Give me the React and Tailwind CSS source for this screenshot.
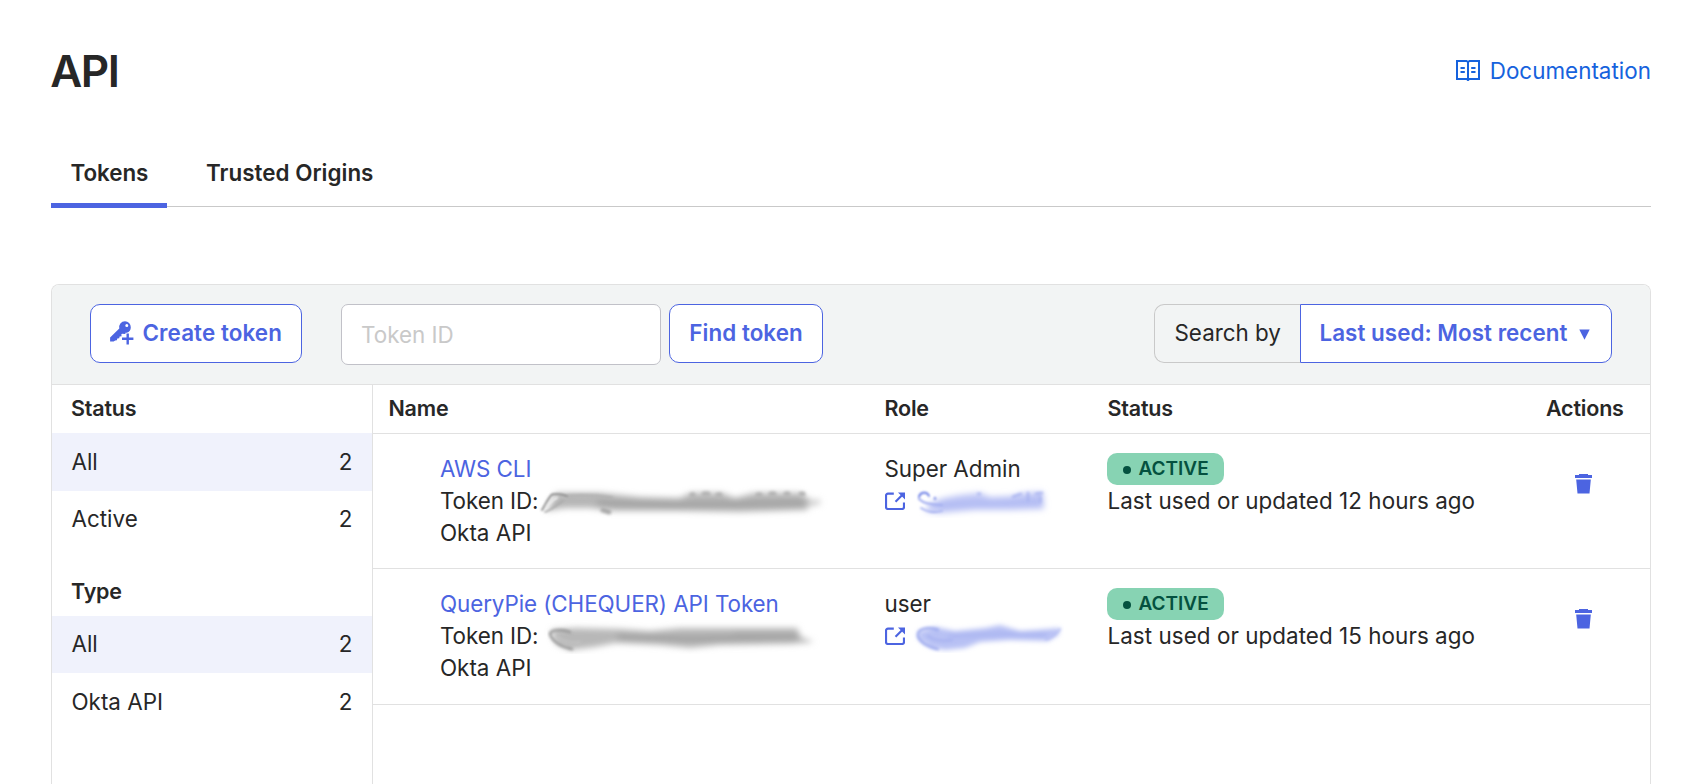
const statusFilters = [
  { label: "All", count: 2, selected: true, height: "h-[58px]" },
  { label: "Active", count: 2, height: "h-[57px] pb-px" },
];

const typeFilters = [
  { label: "All", count: 2, selected: true, height: "h-[57px] pb-px" },
  { label: "Okta API", count: 2, height: "h-[58px]" },
];

const tokens = [
  {
    name: "AWS CLI",
    type: "Okta API",
    role: "Super Admin",
    lastUsed: "Last used or updated 12 hours ago",
    IdMask: IdMaskA,
    UserMask: UserMaskA,
    height: "h-[135px]",
  },
  {
    name: "QueryPie (CHEQUER) API Token",
    type: "Okta API",
    role: "user",
    lastUsed: "Last used or updated 15 hours ago",
    IdMask: IdMaskB,
    UserMask: UserMaskB,
    height: "h-[136px]",
  },
];

function BookIcon() {
  return (
    <svg className="-mt-px" width="24" height="21" viewBox="0 0 24 21" fill="none" stroke="currentColor" strokeWidth="2">
      <path d="M1 1h9.500l1.500 1L13.500 1H23v18h-9.500l-1.500 1-1.500-1H1z" />
      <path d="M12 1.500v19" strokeWidth="2" />
      <path d="M4.500 8h4.300M4.500 12h4.300M15.200 8h4.300M15.200 12h4.300" strokeWidth="2" />
    </svg>
  );
}

function KeyPlusIcon() {
  return (
    <svg width="24" height="24" viewBox="0 0 24 24" fill="currentColor">
      <path
        fillRule="evenodd"
        d="M15 .2a6 6 0 0 1 5.800 6 6 6 0 0 1-4 5.600h-1.400v1.300L12 12.700l-.7.8.3 1.700-2 .3-.4 1.700-1.900.4-.4 1.700-1.700.3L3.600 20.400H.1v-4L9.300 7.500A5.900 5.900 0 0 1 15 .2ZM16.800 3a1.500 1.500 0 1 0 0 3 1.500 1.500 0 0 0 0-3Z"
      />
      <path d="M16.500 12.400h2.400v4.200h4.500v2.300h-4.500v4.500h-2.400v-4.500H12v-2.300h4.500z" />
    </svg>
  );
}

function ExternalIcon() {
  return (
    <svg className="ml-px mt-[7px] shrink-0" width="20" height="18" viewBox="0 0 20 18" fill="none" stroke="#4c64e1" strokeWidth="2.200">
      <path d="M8.800 1.600H3a2 2 0 0 0-2 2V15a2 2 0 0 0 2 2h14a2 2 0 0 0 2-2v-4.500" />
      <path d="M10.500 9.700 17.500 2.800" />
      <path d="M13 .4H20v7z" fill="#4c64e1" stroke="none" />
    </svg>
  );
}

function TrashIcon() {
  return (
    <svg width="17" height="20" viewBox="0 0 17 20" fill="#4c64e1">
      <path d="M4 0h9v1H17v3H0V1h4z" />
      <path d="M1.200 5.600h14.600L14.500 19.600h-12z" />
    </svg>
  );
}

function IdMaskA() {
  return (
    <svg className="shrink-0" width="296" height="36" viewBox="536 482 296 36" fill="none" strokeLinecap="round" strokeLinejoin="round">
      <defs>
        <filter id="ida-soft" x="-10%" y="-60%" width="120%" height="220%"><feGaussianBlur stdDeviation="3.200" /></filter>
        <filter id="ida-mid" x="-10%" y="-60%" width="120%" height="220%"><feGaussianBlur stdDeviation="1.800" /></filter>
        <filter id="ida-fine" x="-10%" y="-60%" width="120%" height="220%"><feGaussianBlur stdDeviation="0.900" /></filter>
      </defs>
      <g filter="url(#ida-soft)">
        <path d="M550 503 556 492 600 492 640 496 680 497 690 492 722 492 735 497 754 492 800 492 814 501 806 509 740 511 680 510 615 510 590 507 565 507 546 510Z" fill="#b6b6b6" />
        <path d="M600 502 680 504 805 502" stroke="#a2a2a2" strokeWidth="6" />
        <path d="M808 503 818 501" stroke="#ccc" strokeWidth="5" />
      </g>
      <g filter="url(#ida-mid)">
        <path d="M692 494l1 0M704 493l4 0M718 494l2 0M758 494l2 0M771 493l3 0M786 493l2 0M801 493l2 0" stroke="#b4b4b4" strokeWidth="5" />
        <path d="M603 509 609 511" stroke="#a8a8a8" strokeWidth="5" />
        <path d="M568 495C585 494 600 495 612 497" stroke="#b0b0b0" strokeWidth="3" />
      </g>
      <g filter="url(#ida-fine)">
        <path d="M542 509C546 503 548 497 552 493.500 558 492.500 562 493 567 495" stroke="#858585" strokeWidth="1.800" />
        <path d="M545 511C552 509 556 504 563 500" stroke="#aaa" strokeWidth="1.800" />
        <path d="M547 505C551 502 553 498 557 497" stroke="#eee" strokeWidth="2" />
      </g>
    </svg>
  );
}

function IdMaskB() {
  return (
    <svg className="shrink-0" width="296" height="36" viewBox="536 617 296 36" fill="none" strokeLinecap="round" strokeLinejoin="round">
      <defs>
        <filter id="idb-soft" x="-10%" y="-60%" width="120%" height="220%"><feGaussianBlur stdDeviation="3.200" /></filter>
        <filter id="idb-fine" x="-10%" y="-60%" width="120%" height="220%"><feGaussianBlur stdDeviation="1.800" /></filter>
      </defs>
      <g filter="url(#idb-soft)">
        <path d="M551 629 575 627 620 628 650 630 680 627 720 627 797 627 801 636 814 641 790 643 720 644 690 647 660 644 615 642 595 646 570 649 556 643Z" fill="#b8b8b8" />
        <path d="M620 636 690 638 795 636" stroke="#a2a2a2" strokeWidth="6" />
        <path d="M735 632 795 632" stroke="#b0b0b0" strokeWidth="4" />
      </g>
      <g filter="url(#idb-fine)">
        <path d="M570 631C562 628 550 629 550 633 552 640 561 646 572 648" stroke="#909090" strokeWidth="2.400" />
        <path d="M558 636C566 642 574 642 580 641" stroke="#c4c4c4" strokeWidth="2" />
      </g>
    </svg>
  );
}

function UserMaskA() {
  return (
    <svg className="shrink-0" width="152" height="36" viewBox="912 482 152 36" fill="none" strokeLinecap="round" strokeLinejoin="round">
      <defs>
        <filter id="usa-soft" x="-10%" y="-60%" width="120%" height="220%"><feGaussianBlur stdDeviation="3" /></filter>
        <filter id="usa-mid" x="-10%" y="-60%" width="120%" height="220%"><feGaussianBlur stdDeviation="1.700" /></filter>
        <filter id="usa-fine" x="-10%" y="-60%" width="120%" height="220%"><feGaussianBlur stdDeviation="0.800" /></filter>
      </defs>
      <g filter="url(#usa-soft)">
        <path d="M930 503 944 498 960 495 980 493 990 497 1012 496 1024 493 1043 492 1044 509 1010 510 975 510 940 513 925 511Z" fill="#bdc5f5" />
        <path d="M940 505 1040 502" stroke="#b0baf3" strokeWidth="5" />
      </g>
      <g filter="url(#usa-mid)">
        <path d="M1013 497 1021 494M1028 493v8M1036 494 1042 493M1040 497v5M978 494h2" stroke="#a8b3f0" strokeWidth="2.500" />
      </g>
      <g filter="url(#usa-fine)">
        <path d="M919 497C920 492 927 491 929 496" stroke="#6075e4" strokeWidth="1.800" />
        <path d="M919 499C924 504 932 505 942 505" stroke="#a5b0f0" strokeWidth="2.200" />
        <path d="M921 508C927 512 934 513 942 511" stroke="#a5b0f0" strokeWidth="1.800" />
        <path d="M935 498v1" stroke="#8d9bea" strokeWidth="2.500" />
      </g>
    </svg>
  );
}

function UserMaskB() {
  return (
    <svg className="shrink-0" width="152" height="36" viewBox="912 617 152 36" fill="none" strokeLinecap="round" strokeLinejoin="round">
      <defs>
        <filter id="usb-soft" x="-10%" y="-60%" width="120%" height="220%"><feGaussianBlur stdDeviation="2.900" /></filter>
        <filter id="usb-fine" x="-10%" y="-60%" width="120%" height="220%"><feGaussianBlur stdDeviation="1.500" /></filter>
      </defs>
      <g filter="url(#usb-soft)">
        <path d="M918 632 935 627 955 631 985 628 1000 625 1020 631 1035 630 1060 628 1058 635 1048 641 1010 640 980 642 965 648 945 650 930 647 919 639Z" fill="#b8c1f4" />
        <path d="M950 636 1000 634 1045 635" stroke="#aab5f1" strokeWidth="4" />
      </g>
      <g filter="url(#usb-fine)">
        <path d="M938 630C928 626 917 629 918 636 920 642 926 646 938 649" stroke="#9ba8ee" strokeWidth="2.500" />
        <path d="M928 636C936 642 946 641 952 640" stroke="#a5b0f0" strokeWidth="2" />
        <path d="M1046 639C1052 638 1056 634 1060 629" stroke="#b0baf3" strokeWidth="2" />
      </g>
    </svg>
  );
}

function FilterRow({ label, count, selected, height }) {
  return (
    <li className={`flex items-center justify-between pl-[19.500px] pr-[19.500px] ${height} ${selected ? "bg-[#f0f2fc]" : ""}`}>
      <span>{label}</span>
      <span>{count}</span>
    </li>
  );
}

function SectionTitle({ children, className = "" }) {
  return <h2 className={`text-[21.5px] font-semibold leading-8 tracking-[-0.2px] ${className}`}>{children}</h2>;
}

function TokenRow({ token }) {
  const { IdMask, UserMask } = token;
  return (
    <div className={`grid grid-cols-[495px_223px_438px_121px] border-b border-[#e1e1e1] pt-[19px] ${token.height}`}>
      <div className="pl-[67px]">
        <a className="block whitespace-nowrap tracking-[-0.080px] text-[#4c64e1]">{token.name}</a>
        <div className="flex h-8 items-center whitespace-nowrap">
          <span className="w-[96px] shrink-0 tracking-[-0.080px]">Token ID:</span>
          <IdMask />
        </div>
        <div>{token.type}</div>
      </div>
      <div className="pl-4">
        <div className="pl-[0.500px] tracking-[-0.040px]">{token.role}</div>
        <div className="flex h-8 items-start">
          <ExternalIcon />
          <span className="-mt-[3px] ml-[7px] shrink-0"><UserMask /></span>
        </div>
      </div>
      <div className="pl-4">
        <div className="flex h-8 w-[117px] items-center rounded-[10px] bg-[#87d3b3] pl-4 text-[19px] font-semibold text-[#04513f]">
          <span className="mr-[7.500px] mt-px size-2 rounded-full bg-[#04513f]" />
          ACTIVE
        </div>
        <div className="whitespace-nowrap pl-[0.500px] tracking-[0.060px]">{token.lastUsed}</div>
      </div>
      <div className="pl-[46px] pt-[21px]">
        <TrashIcon />
      </div>
    </div>
  );
}

export default function App() {
  return (
    <div className="flex h-[784px] flex-col overflow-hidden bg-white pl-[51px] pr-[53px] pt-[47px] font-[Inter,sans-serif] text-[22.4px] leading-8 text-[#272727]">
      <header className="flex h-[110px] shrink-0 items-start justify-between">
        <h1 className="-ml-[0.800px] text-[44px] font-semibold leading-[48px] tracking-[-1.400px]">API</h1>
        <a className="mt-2 flex items-center gap-[10px] tracking-[0.030px] text-[#1662dd]">
          <BookIcon />
          Documentation
        </a>
      </header>

      <nav className="flex h-[50px] shrink-0 gap-[19.500px] border-b border-[#c9c9c9] font-semibold">
        <a className="h-[51px] w-[116px] border-b-[5px] border-[#4c64e1] pl-[19.500px] tracking-[-0.050px]">Tokens</a>
        <a className="px-[19.500px] tracking-[0.030px]">Trusted Origins</a>
      </nav>

      <section className="mt-[77px] flex min-h-0 w-[1600px] flex-1 flex-col rounded-t-lg border border-b-0 border-[#e1e1e1]">
        <div className="flex h-[100px] shrink-0 items-start rounded-t-[7px] border-b border-[#e1e1e1] bg-[#f2f4f4] px-[38px] pt-[19px]">
          <button className="flex h-[59px] w-[212px] items-center gap-[8.500px] rounded-[10px] border border-[#4c64e1] bg-white pb-[2px] pl-[19px] font-semibold tracking-[0.100px] text-[#4c64e1]">
            <KeyPlusIcon />
            Create token
          </button>
          <div className="ml-[39px] flex h-[61px] w-80 items-center rounded-[7px] border border-[#c1c1c8] bg-white pl-[19px] text-[#c9c9c9]">
            Token ID
          </div>
          <button className="ml-2 h-[59px] w-[154px] rounded-[10px] border border-[#4c64e1] bg-white pb-[2px] font-semibold tracking-[0.050px] text-[#4c64e1]">
            Find token
          </button>
          <div className="ml-auto flex h-[59px] w-[458px]">
            <div className="w-[146px] rounded-l-[10px] border border-r-0 border-[#c9c9c9] pl-[19.500px] pt-[12px]">Search by</div>
            <button className="flex flex-1 items-center rounded-r-[10px] border border-[#4c64e1] bg-white pb-[2px] pl-[18.500px] font-semibold tracking-[0.040px] text-[#4c64e1]">
              Last used: Most recent
              <svg className="ml-[11.500px] mt-[4px]" width="11" height="11" viewBox="0 0 11 11" fill="currentColor">
                <path d="M.3.500h10.400L5.500 10.800z" />
              </svg>
            </button>
          </div>
        </div>

        <div className="flex min-h-0 flex-1">
          <aside className="w-[321px] shrink-0 border-r border-[#e1e1e1]">
            <SectionTitle className="h-12 pl-[19px] pt-[7px]">Status</SectionTitle>
            <ul>
              {statusFilters.map((f) => <FilterRow key={f.label} {...f} />)}
            </ul>
            <SectionTitle className="h-[68px] pl-[19px] pt-[27px]">Type</SectionTitle>
            <ul>
              {typeFilters.map((f) => <FilterRow key={f.label} {...f} />)}
            </ul>
          </aside>

          <main className="min-w-0 flex-1">
            <div className="grid h-[49px] grid-cols-[495px_223px_438px_121px] border-b border-[#e1e1e1] pt-[7px]">
              <SectionTitle className="pl-[15.500px]">Name</SectionTitle>
              <SectionTitle className="pl-[16.500px]">Role</SectionTitle>
              <SectionTitle className="pl-[16.500px]">Status</SectionTitle>
              <SectionTitle className="pl-[17px]">Actions</SectionTitle>
            </div>
            {tokens.map((t) => <TokenRow key={t.name} token={t} />)}
          </main>
        </div>
      </section>
    </div>
  );
}
